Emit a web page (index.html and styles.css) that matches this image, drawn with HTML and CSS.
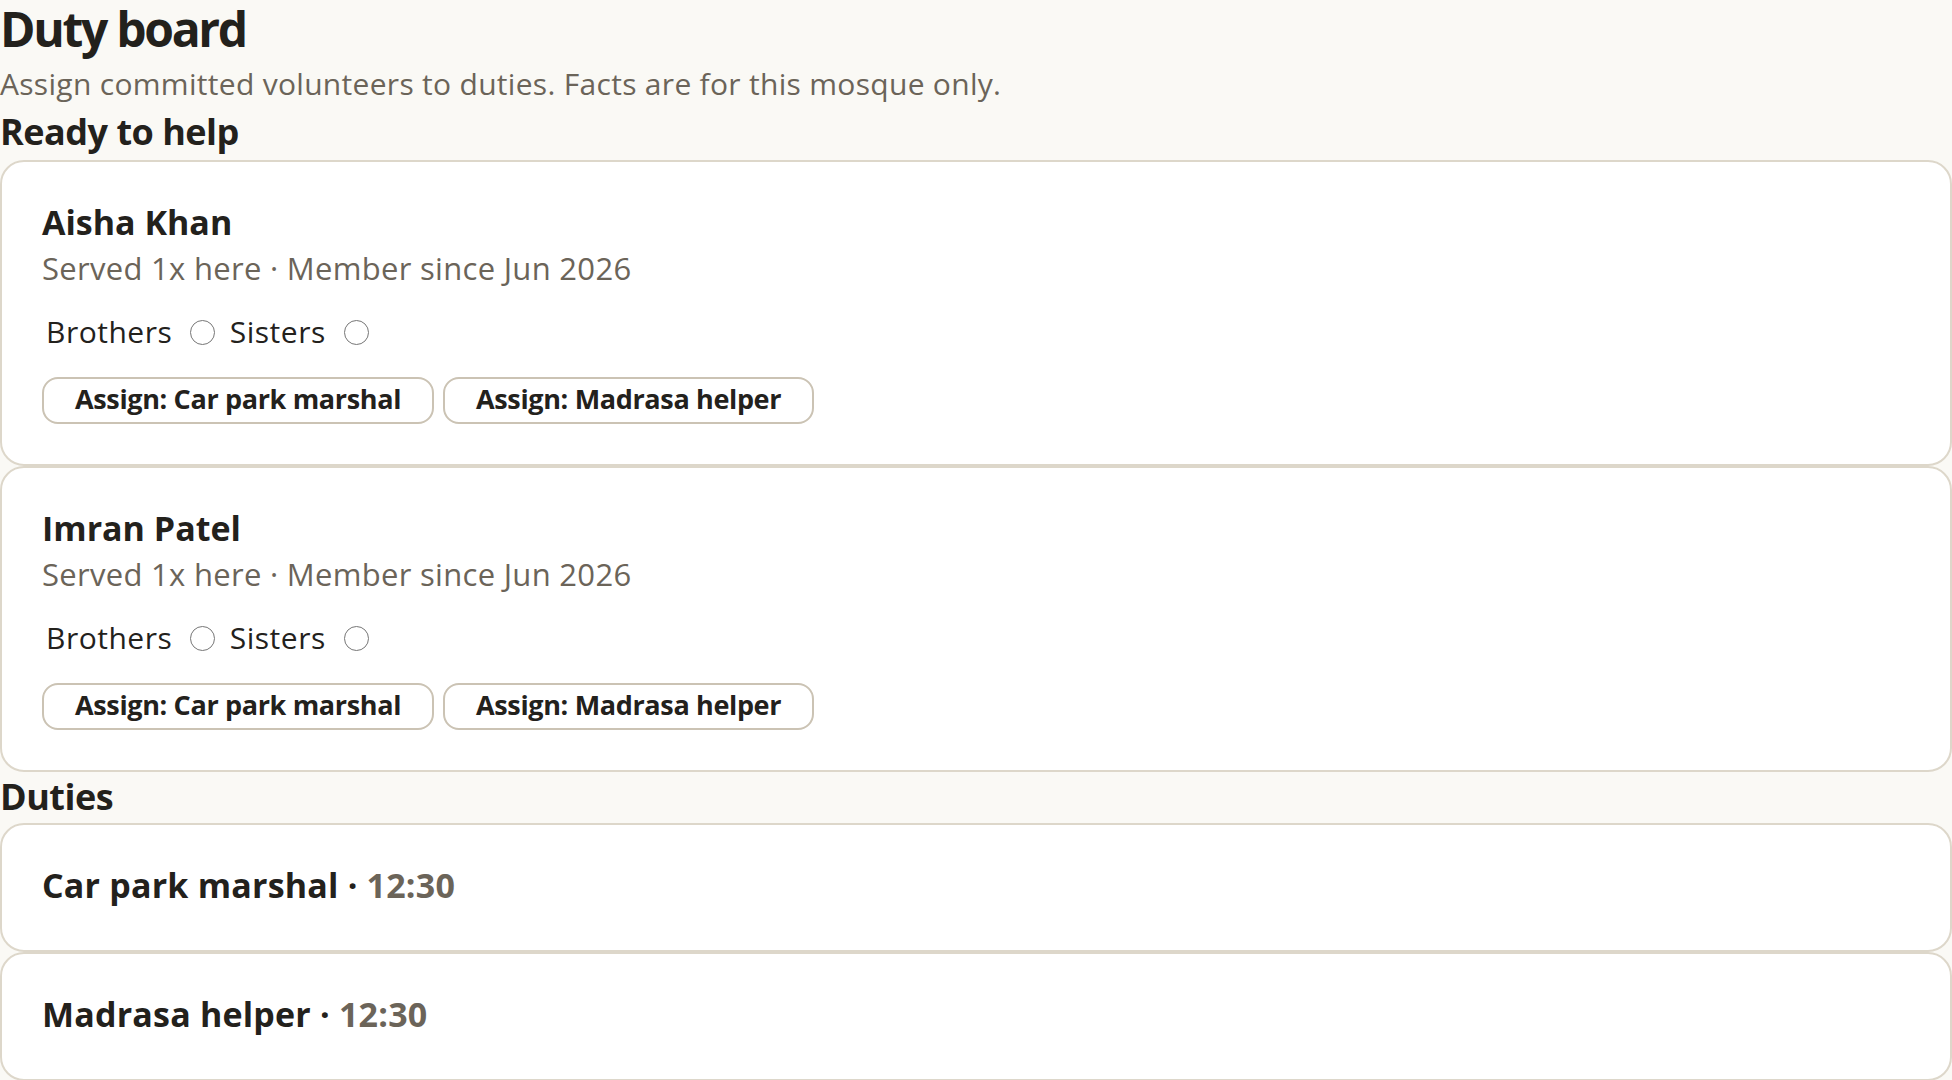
FILE: index.html
```html
<!DOCTYPE html>
<html lang="en">
  <head>
    <meta charset="UTF-8">
    <meta name="viewport" content="width=device-width, initial-scale=1.0">
    <title>Duty board</title>

    <link rel="stylesheet" href="styles.css">
  </head>

  <body>
    <h1 class="title">Duty board</h1>
    <p class="lede">Assign committed volunteers to duties. Facts are for this mosque only.</p>

    <h2 class="section">Ready to help</h2>
    <div class="list">
      <div class="card">
        <h3 class="name">Aisha Khan</h3>
        <p class="meta">Served 1x here · Member since Jun 2026</p>
        <div class="side">
          <label>Brothers <input type="radio" name="side-aisha"></label>
          <label>Sisters <input type="radio" name="side-aisha"></label>
        </div>
        <div class="actions">
          <button class="btn-assign">Assign: Car park marshal</button>
          <button class="btn-assign">Assign: Madrasa helper</button>
        </div>
      </div>

      <div class="card">
        <h3 class="name">Imran Patel</h3>
        <p class="meta">Served 1x here · Member since Jun 2026</p>
        <div class="side">
          <label>Brothers <input type="radio" name="side-imran"></label>
          <label>Sisters <input type="radio" name="side-imran"></label>
        </div>
        <div class="actions">
          <button class="btn-assign">Assign: Car park marshal</button>
          <button class="btn-assign">Assign: Madrasa helper</button>
        </div>
      </div>
    </div>

    <h2 class="section">Duties</h2>
    <div class="list">
      <div class="card duty">
        <span class="duty-name">Car park marshal</span> · <span class="duty-time">12:30</span>
      </div>
      <div class="card duty">
        <span class="duty-name">Madrasa helper</span> · <span class="duty-time">12:30</span>
      </div>
    </div>
  </body>
</html>
```

FILE: styles.css
```css
body {
  margin: 0;
  font-family: 'Open Sans', 'Noto Sans', sans-serif;
  color: #23211c;
  background-color: #faf9f5;
}

.title {
  margin: 0;
  font-size: 48px;
  font-weight: 700;
  line-height: 57px;
  letter-spacing: -2.3px;
}

.lede {
  margin: 0;
  font-size: 30px;
  line-height: 53px;
  letter-spacing: 0.3px;
  color: #6b6459;
}

.section {
  margin: 0 0 6px;
  font-size: 36px;
  font-weight: 700;
  line-height: 44px;
  letter-spacing: -0.5px;
}

.list + .section {
  margin: 3px 0 4px;
}

.list {
  display: flex;
  flex-direction: column;
}

.card {
  padding: 40px;
  background-color: #fff;
  border: 2px solid #ddd7ca;
  border-radius: 24px;
}

.name {
  margin: 0;
  font-size: 34px;
  font-weight: 700;
  line-height: 40px;
}

.meta {
  margin: 6px 0 0;
  font-size: 31px;
  line-height: 40px;
  letter-spacing: 0.3px;
  color: #6b6459;
}

.side {
  margin-top: 24px;
  padding-left: 4px;
  font-size: 30px;
  line-height: 40px;
  letter-spacing: 0.5px;
}

.side input {
  appearance: none;
  width: 25px;
  height: 25px;
  margin: 0 6px 0 10px;
  vertical-align: -2px;
  border: 1.5px solid #767676;
  border-radius: 50%;
  background-color: #fff;
}

.actions {
  display: flex;
  gap: 9px;
  margin-top: 25px;
}

.btn-assign {
  padding: 4px 31px 8px;
  font-family: inherit;
  font-size: 27px;
  font-weight: 700;
  line-height: 31px;
  letter-spacing: -0.35px;
  color: #23211c;
  background-color: #fff;
  border: 2px solid #cbc3b4;
  border-radius: 16px;
}

.duty {
  padding-bottom: 45px;
  font-size: 34px;
  font-weight: 700;
  line-height: 40px;
  letter-spacing: 0.2px;
}

.duty-time {
  color: #6b6459;
}
```
